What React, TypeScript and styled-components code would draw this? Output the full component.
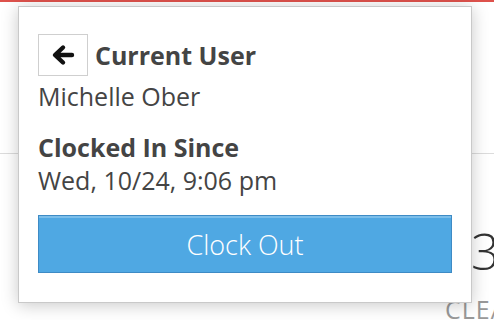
import styled, { createGlobalStyle } from "styled-components";

const GlobalStyle = createGlobalStyle`
  body {
    margin: 0;
    background: #fff;
    font-family: "Open Sans", "Noto Sans", sans-serif;
    color: #444;
  }
`;

const Page = styled.div`
  position: relative;
  width: 494px;
  height: 320px;
  overflow: hidden;
  background: #fff;
`;

const TopBar = styled.div`
  height: 2px;
  background: #de524c;
`;

const HeaderArea = styled.div`
  height: 151px;
  border-bottom: 1px solid #dcdcdc;
`;

const Stats = styled.div`
  display: flex;
  flex-direction: column;
  align-items: flex-start;
  padding: 72px 0 0 445px;
`;

const StatValue = styled.div`
  font-size: 50px;
  font-weight: 300;
  line-height: 50px;
  color: #333;
  padding-left: 26px;
`;

const StatLabel = styled.div`
  margin-top: 18px;
  font-size: 25px;
  line-height: 30px;
  letter-spacing: 1px;
  color: #999;
`;

const Popover = styled.div`
  position: absolute;
  left: 18px;
  top: 6px;
  width: 454px;
  height: 297px;
  box-sizing: border-box;
  padding: 27px 19px 0;
  background: #fff;
  border: 1px solid #c9c9c9;
  box-shadow: 0 2px 16px rgba(0, 0, 0, 0.22);
`;

const HeaderRow = styled.div`
  display: flex;
  align-items: center;
  gap: 7px;
`;

const BackButton = styled.button`
  display: flex;
  align-items: center;
  justify-content: center;
  width: 50px;
  height: 42px;
  padding: 0;
  background: #fff;
  border: 1px solid #cfcfcf;
  color: #111;
  cursor: pointer;
`;

const Heading = styled.div<{ $gap?: number }>`
  margin-top: ${(p) => p.$gap ?? 0}px;
  font-size: 25px;
  font-weight: 700;
  line-height: 33px;
  color: #444;
`;

const Value = styled.div<{ $gap?: number }>`
  margin-top: ${(p) => p.$gap ?? 0}px;
  font-size: 25px;
  line-height: 33px;
  color: #444;
`;

const ClockOutButton = styled.button`
  display: block;
  width: 100%;
  height: 58px;
  margin-top: 18px;
  background: #4fa8e3;
  border: 1px solid #3e8bc5;
  box-shadow: inset 0 2px 0 rgba(255, 255, 255, 0.25);
  color: #fff;
  font-family: "Open Sans", "Noto Sans", sans-serif;
  font-size: 27px;
  font-weight: 300;
  cursor: pointer;
`;

const ArrowLeft = () => (
  <svg width="24" height="24" viewBox="0 0 24 24" fill="none">
    <path
      d="M21 12H5M12 4.5L4 12l8 7.5"
      stroke="#111"
      strokeWidth="4.4"
      strokeLinecap="round"
      strokeLinejoin="round"
    />
  </svg>
);

export default function App() {
  return (
    <Page>
      <GlobalStyle />
      <TopBar />
      <HeaderArea />
      <Stats>
        <StatValue>3</StatValue>
        <StatLabel>CLEARED</StatLabel>
      </Stats>
      <Popover>
        <HeaderRow>
          <BackButton aria-label="Back">
            <ArrowLeft />
          </BackButton>
          <Heading>Current User</Heading>
        </HeaderRow>
        <Value $gap={4}>Michelle Ober</Value>
        <Heading $gap={18}>Clocked In Since</Heading>
        <Value>Wed, 10/24, 9:06 pm</Value>
        <ClockOutButton>Clock Out</ClockOutButton>
      </Popover>
    </Page>
  );
}
